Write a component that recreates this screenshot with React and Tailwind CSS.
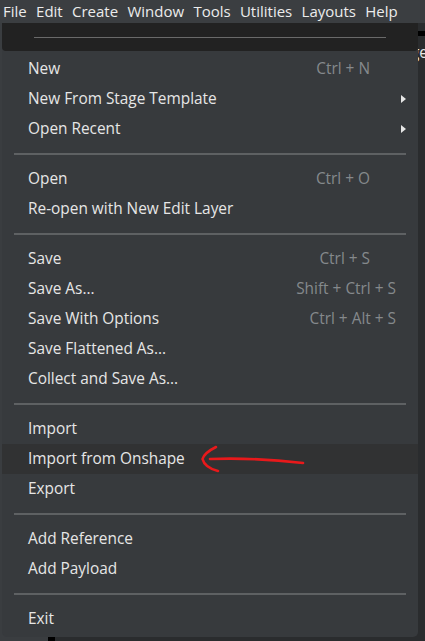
import React from 'react'

const font = { fontFamily: '"Open Sans", "Noto Sans", sans-serif' }

const menuBar = ['File', 'Edit', 'Create', 'Window', 'Tools', 'Utilities', 'Layouts', 'Help']

const groups = [
  [
    { label: 'New', shortcut: 'Ctrl + N' },
    { label: 'New From Stage Template', sub: true },
    { label: 'Open Recent', sub: true },
  ],
  [
    { label: 'Open', shortcut: 'Ctrl + O' },
    { label: 'Re-open with New Edit Layer' },
  ],
  [
    { label: 'Save', shortcut: 'Ctrl + S' },
    { label: 'Save As...', shortcut: 'Shift + Ctrl + S', wide: true },
    { label: 'Save With Options', shortcut: 'Ctrl + Alt + S', wide: true },
    { label: 'Save Flattened As...' },
    { label: 'Collect and Save As...' },
  ],
  [
    { label: 'Import' },
    { label: 'Import from Onshape', active: true },
    { label: 'Export' },
  ],
  [
    { label: 'Add Reference' },
    { label: 'Add Payload' },
  ],
  [{ label: 'Exit' }],
]

function Row({ item }) {
  return (
    <div className={`relative flex items-center h-[30px] pl-[26px] ${item.active ? 'bg-[#313233]' : ''}`}>
      <span className="text-[15.4px] text-[#e6e6e6]">{item.label}</span>
      {item.active && (
        <svg className="ml-[16px]" width="106" height="30" viewBox="0 0 106 30">
          <path d="M15 3 C9 6, 3 10, 1.5 15 C3 21, 9 25, 17 27" stroke="#e8191b" strokeWidth="2.6" fill="none" strokeLinecap="round" />
          <path d="M9 15 C38 14, 68 15, 102 19" stroke="#e8191b" strokeWidth="2.6" fill="none" strokeLinecap="round" />
        </svg>
      )}
      <div className="flex-1" />
      {item.shortcut && (
        <span className={`text-[15.4px] text-[#85898c] ${item.wide ? 'mr-[22px]' : 'mr-[48px]'}`}>
          {item.shortcut}
        </span>
      )}
      {item.sub && (
        <svg className="mr-[12px]" width="5" height="8" viewBox="0 0 5 8">
          <path d="M0 0 L5 4 L0 8 Z" fill="#e6e6e6" />
        </svg>
      )}
    </div>
  )
}

export default function App() {
  return (
    <div className="relative w-[425px] h-[641px] overflow-hidden bg-[#2a2c2e] flex flex-col" style={font}>
      {/* menu bar */}
      <div className="flex h-[23px] shrink-0 items-center gap-[9.3px] pl-[3px] bg-[#3b3e41] text-[15px] text-[#ececec]">
        {menuBar.map((m) => (
          <span key={m}>{m}</span>
        ))}
      </div>

      {/* window behind the menu */}
      <div className="flex flex-1">
        <div className="w-[48px] bg-[#3a3d40]" />
        <div className="w-[7px] bg-black" />
        <div className="flex-1 flex flex-col items-end">
          <div className="mt-[8px] h-[5px] w-full bg-black" />
          <span className="mt-[7px] mr-[-3px] text-[15.4px] text-[#e6e6e6] leading-[20px]">Stage</span>
        </div>
      </div>

      {/* dropdown */}
      <div className="absolute left-[2px] top-[23px] w-[416px] rounded-b-[5px] bg-[#373a3d] overflow-hidden">
        <div className="h-[28px] flex items-center px-[32px] bg-[#222222] rounded-b-[4px]">
          <div className="h-px w-full bg-[#6a6a6a]" />
        </div>
        <div className="pt-[3px] pb-[3px]">
          {groups.map((g, gi) => (
            <div key={gi}>
              {gi > 0 && (
                <div className="h-[20px] flex items-center px-[12px]">
                  <div className="h-[2px] w-full bg-[#5e6163]" />
                </div>
              )}
              {g.map((item) => (
                <Row key={item.label} item={item} />
              ))}
            </div>
          ))}
        </div>
      </div>
    </div>
  )
}
